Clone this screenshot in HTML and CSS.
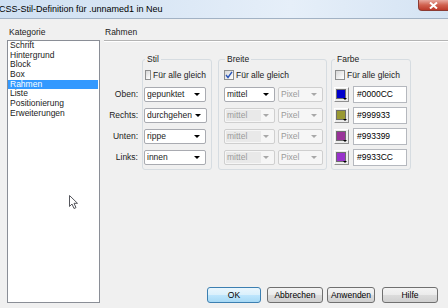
FILE: index.html
```html
<!DOCTYPE html>
<html>
<head>
  <title>CSS-Stil-Definition</title>
  <link rel="stylesheet" href="styles.css">
</head>
<body>
  <div class="titlebar">
    <span class="title">CSS-Stil-Definition für .unnamed1 in Neu</span>
    <span class="close-btn">
      <svg width="9" height="7" viewBox="0 0 9 7"><path d="M1 0.5 L8 6.5 M8 0.5 L1 6.5" stroke="#fff" stroke-width="2"/></svg>
    </span>
  </div>

  <div class="window">
    <div class="sidebar">
      <div class="caption">Kategorie</div>
      <ul class="category-list">
        <li>Schrift</li>
        <li>Hintergrund</li>
        <li>Block</li>
        <li>Box</li>
        <li class="selected">Rahmen</li>
        <li>Liste</li>
        <li>Positionierung</li>
        <li>Erweiterungen</li>
      </ul>
    </div>

    <div class="panel">
      <div class="panel-head">Rahmen</div>

      <div class="groups">
        <div class="side-labels">
          <div class="row">Oben:</div>
          <div class="row">Rechts:</div>
          <div class="row">Unten:</div>
          <div class="row">Links:</div>
        </div>

        <!-- Stil -->
        <fieldset class="group group-stil">
          <legend>Stil</legend>
          <div class="group-body">
            <div class="check"><span class="box"></span>Für alle gleich</div>
            <div class="row"><div class="combo w-stil"><span class="combo-text">gepunktet</span><span class="arrow"></span></div></div>
            <div class="row"><div class="combo w-stil"><span class="combo-text">durchgehend</span><span class="arrow"></span></div></div>
            <div class="row"><div class="combo w-stil"><span class="combo-text">rippe</span><span class="arrow"></span></div></div>
            <div class="row"><div class="combo w-stil"><span class="combo-text">innen</span><span class="arrow"></span></div></div>
          </div>
        </fieldset>

        <!-- Breite -->
        <fieldset class="group group-breite">
          <legend>Breite</legend>
          <div class="group-body">
            <div class="check">
              <span class="box"><svg width="8" height="8" viewBox="0 0 8 8"><path d="M1 4 L3 6.5 L7 0.8" fill="none" stroke="#2a56b8" stroke-width="1.4"/></svg></span>Für alle gleich
            </div>
            <div class="row">
              <div class="combo w-size"><span class="combo-text">mittel</span><span class="arrow"></span></div>
              <div class="combo w-unit disabled"><span class="combo-text">Pixel</span><span class="arrow"></span></div>
            </div>
            <div class="row">
              <div class="combo w-size disabled"><span class="combo-text shaded">mittel</span><span class="arrow"></span></div>
              <div class="combo w-unit disabled"><span class="combo-text">Pixel</span><span class="arrow"></span></div>
            </div>
            <div class="row">
              <div class="combo w-size disabled"><span class="combo-text shaded">mittel</span><span class="arrow"></span></div>
              <div class="combo w-unit disabled"><span class="combo-text">Pixel</span><span class="arrow"></span></div>
            </div>
            <div class="row">
              <div class="combo w-size disabled"><span class="combo-text shaded">mittel</span><span class="arrow"></span></div>
              <div class="combo w-unit disabled"><span class="combo-text">Pixel</span><span class="arrow"></span></div>
            </div>
          </div>
        </fieldset>

        <!-- Farbe -->
        <fieldset class="group group-farbe">
          <legend>Farbe</legend>
          <div class="group-body">
            <div class="check"><span class="box"></span>Für alle gleich</div>
            <div class="row">
              <span class="swatch"><span class="swatch-color" style="background:#0000cc"></span><span class="swatch-arrow"></span></span>
              <span class="hex">#0000CC</span>
            </div>
            <div class="row">
              <span class="swatch"><span class="swatch-color" style="background:#999933"></span><span class="swatch-arrow"></span></span>
              <span class="hex">#999933</span>
            </div>
            <div class="row">
              <span class="swatch"><span class="swatch-color" style="background:#993399"></span><span class="swatch-arrow"></span></span>
              <span class="hex">#993399</span>
            </div>
            <div class="row">
              <span class="swatch"><span class="swatch-color" style="background:#9933cc"></span><span class="swatch-arrow"></span></span>
              <span class="hex">#9933CC</span>
            </div>
          </div>
        </fieldset>
      </div>

      <div class="footer">
        <button class="btn btn-ok">OK</button>
        <button class="btn btn-cancel">Abbrechen</button>
        <button class="btn btn-apply">Anwenden</button>
        <button class="btn btn-help">Hilfe</button>
      </div>
    </div>
  </div>

  <svg class="cursor" width="11" height="15" viewBox="0 0 11 15">
    <path d="M0.5 0.5 L0.5 11.5 L3 9 L5 13.5 L7 12.6 L5 8.3 L8.5 8.3 Z" fill="#fff" stroke="#55565c" stroke-width="1" stroke-linejoin="round"/>
  </svg>
</body>
</html>
```

FILE: styles.css
```css
* {
  box-sizing: border-box;
}

body {
  margin: 0;
  width: 448px;
  height: 308px;
  overflow: hidden;
  position: relative;
  background-color: #f0f0f0;
  font-family: "Liberation Sans", Arial, sans-serif;
  font-size: 8.5px;
  color: #1b1b1b;
}

/* title bar */
.titlebar {
  display: flex;
  height: 19px;
  border-bottom: 1px solid #a2b2c4;
  background: linear-gradient(90deg, #cfe0f2 0%, #dae7f5 35%, #e6eff9 65%, #d4e3f3 100%);
}

.title {
  flex: 1;
  margin-left: -1px;
  line-height: 18px;
  font-size: 9px;
  color: #000;
}

.close-btn {
  width: 30px;
  height: 11px;
  display: flex;
  align-items: center;
  justify-content: center;
  border: 1px solid #8b3b33;
  border-top: none;
  border-right: none;
  border-radius: 0 0 0 4px;
  background: linear-gradient(#e8aaa0, #d0614f 50%, #bb3a2a);
}

/* main area */
.window {
  display: flex;
  height: 289px;
}

.sidebar {
  width: 93px;
  margin-left: 7px;
  padding-top: 8px;
  display: flex;
  flex-direction: column;
}

.caption {
  height: 10px;
  line-height: 10px;
  margin-bottom: 3px;
  padding-left: 2px;
}

.category-list {
  list-style: none;
  margin: 0 0 5px 0;
  padding: 0;
  flex: 1;
  border: 1px solid #8a8e96;
  background-color: #fff;
}

.category-list li {
  height: 9.7px;
  line-height: 9.7px;
  padding-left: 2px;
  margin-right: 1px;
  white-space: nowrap;
}

.category-list li.selected {
  background-color: #3399ff;
  color: #fff;
}

.panel {
  flex: 1;
  margin-left: 4px;
  display: flex;
  flex-direction: column;
}

.panel-head {
  padding: 8px 0 3px 1px;
  line-height: 10px;
  border-bottom: 1px solid #b4b4b4;
  box-shadow: 0 1px 0 #fff;
}

.groups {
  display: flex;
  align-items: flex-start;
  margin-top: 13px;
}

.side-labels {
  width: 36px;
  padding-top: 33px;
  padding-right: 2px;
  display: flex;
  flex-direction: column;
  gap: 6px;
  text-align: right;
}

.side-labels .row {
  height: 15px;
  line-height: 15px;
}

/* group boxes */
.group {
  margin: 0;
  min-width: 0;
  border: 1px solid #d6dce1;
  border-radius: 3px;
}

.group legend {
  padding: 0 2px;
  margin-left: 1px;
  line-height: 10px;
}

.group-stil {
  width: 70px;
  margin-left: 2px;
  padding: 0 5px 4px 1px;
}

.group-breite {
  width: 109px;
  margin-left: 6px;
  padding: 0 3px 4px 5px;
}

.group-farbe {
  width: 80px;
  margin-left: 4px;
  padding: 0 3px 4px 2px;
}

.group-body {
  padding-top: 6px;
  display: flex;
  flex-direction: column;
  gap: 6px;
}

.group-body .row {
  height: 15px;
  display: flex;
  align-items: center;
}

.check {
  height: 10px;
  margin-bottom: 1px;
  margin-left: 1px;
  display: flex;
  align-items: center;
  gap: 2px;
  white-space: nowrap;
}

.group-breite .check {
  margin-left: 0;
}

.box {
  width: 10px;
  height: 10px;
  border: 1px solid #8e8f8f;
  background: linear-gradient(135deg, #d6d6d6, #f4f4f4 70%, #fff);
  display: flex;
  align-items: center;
  justify-content: center;
}

/* combo boxes */
.combo {
  height: 15px;
  display: flex;
  align-items: center;
  border: 1px solid #a9abb1;
  border-radius: 2px;
  background-color: #fff;
  padding: 1px 0 1px 2px;
}

.combo-text {
  flex: 1;
  overflow: hidden;
  white-space: nowrap;
  line-height: 11px;
}

.arrow {
  width: 0;
  height: 0;
  margin: 0 5px 0 3px;
  border-left: 3px solid transparent;
  border-right: 3px solid transparent;
  border-top: 3px solid #000;
}

.w-stil {
  width: 63px;
}

.w-size {
  width: 51px;
}

.w-unit {
  width: 45px;
  margin-left: 3px;
}

.combo.disabled {
  border-color: #cfcfcf;
  background-color: #f6f6f6;
  color: #9a9a9a;
}

.combo.disabled .arrow {
  border-top-color: #a8a8a8;
}

.combo-text.shaded {
  flex: none;
  width: 35px;
  margin-left: -1px;
  padding-left: 1px;
  background-color: #e9e9e9;
}

.combo.w-size.disabled .combo-text.shaded + .arrow {
  margin-left: auto;
}

/* colour pickers */
.swatch {
  position: relative;
  width: 15px;
  height: 15px;
  border: 1px solid;
  border-color: #fff #8f8f8f #8f8f8f #fff;
  background-color: #ececec;
  padding: 1px;
}

.swatch-color {
  display: block;
  width: 10px;
  height: 10px;
  border: 1px solid #6e6e6e;
}

.swatch-arrow {
  position: absolute;
  right: 1px;
  bottom: 1px;
  width: 0;
  height: 0;
  border-left: 2px solid transparent;
  border-right: 2px solid transparent;
  border-top: 2px solid #000;
}

.hex {
  width: 54px;
  height: 17px;
  margin-left: 4px;
  padding-left: 3px;
  line-height: 15px;
  border: 1px solid #b5b8be;
  background-color: #fff;
  color: #000;
}

/* buttons */
.footer {
  margin-top: auto;
  display: flex;
  justify-content: flex-end;
  padding: 0 10px 5px 0;
}

.btn {
  height: 16px;
  padding: 0;
  font-family: "Liberation Sans", Arial, sans-serif;
  font-size: 8.5px;
  color: #000;
  border: 1px solid #707070;
  border-radius: 3px;
  background: linear-gradient(#f4f4f4, #ebebeb 50%, #dcdcdc 51%, #d0d0d0);
}

.btn-ok {
  width: 54px;
  border-color: #3c7fb1;
  background: linear-gradient(#eaf6fd, #d9f0fc 50%, #bee6fd 51%, #a7d9f5);
}

.btn-cancel {
  width: 56px;
  margin-left: 6px;
}

.btn-apply {
  width: 48px;
  margin-left: 4px;
}

.btn-help {
  width: 56px;
  margin-left: 7px;
}

/* mouse pointer over the list */
.cursor {
  position: absolute;
  left: 69px;
  top: 195px;
}
```
